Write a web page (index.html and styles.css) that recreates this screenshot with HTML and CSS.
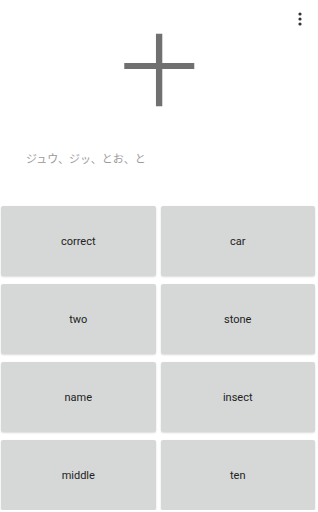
FILE: index.html
```html
<!DOCTYPE html>
<html lang="ja">
<head>
  <meta charset="UTF-8" />
  <title>Kanji Quiz</title>
  <link rel="stylesheet" href="styles.css">
</head>
<body>

  <div class="topbar">
    <button class="menu" aria-label="More options">
      <svg width="4" height="14" viewBox="0 0 4 14">
        <circle cx="2" cy="2" r="1.6" />
        <circle cx="2" cy="7" r="1.6" />
        <circle cx="2" cy="12" r="1.6" />
      </svg>
    </button>
  </div>

  <div class="kanji">十</div>

  <div class="readings">ジュウ、ジッ、とお、と</div>

  <div class="answers">
    <button class="answer">correct</button>
    <button class="answer">car</button>
    <button class="answer">two</button>
    <button class="answer">stone</button>
    <button class="answer">name</button>
    <button class="answer">insect</button>
    <button class="answer">middle</button>
    <button class="answer">ten</button>
  </div>

</body>
</html>
```

FILE: styles.css
```css
body {
  margin: 0;
  background-color: #ffffff;
  font-family: Roboto, 'Noto Sans CJK JP', sans-serif;
  color: #222;
}

.topbar {
  display: flex;
  justify-content: flex-end;
  height: 27px;
}

.menu {
  background: none;
  border: none;
  padding: 11px 16px 0 0;
  height: 27px;
  cursor: pointer;
}

.menu svg {
  fill: #333;
  display: block;
}

.kanji {
  font-family: 'Noto Sans CJK JP', sans-serif;
  font-size: 78px;
  line-height: 78px;
  text-align: center;
  color: #707070;
  height: 78px;
}

.readings {
  font-family: 'Noto Sans CJK JP', sans-serif;
  font-size: 11px;
  color: #9a9a9a;
  padding: 45px 0 0 26px;
  line-height: 16px;
}

.answers {
  display: grid;
  grid-template-columns: 1fr 1fr;
  gap: 8px 5px;
  padding: 40px 3px 0 1px;
}

.answer {
  height: 70px;
  background-color: #d6d8d8;
  border: none;
  border-radius: 2px;
  box-shadow: 0 1px 2px rgba(0, 0, 0, 0.15);
  font-family: Roboto, sans-serif;
  font-size: 11px;
  color: #222;
  cursor: pointer;
}

.answer:active {
  background-color: #c4c6c6;
}
```
